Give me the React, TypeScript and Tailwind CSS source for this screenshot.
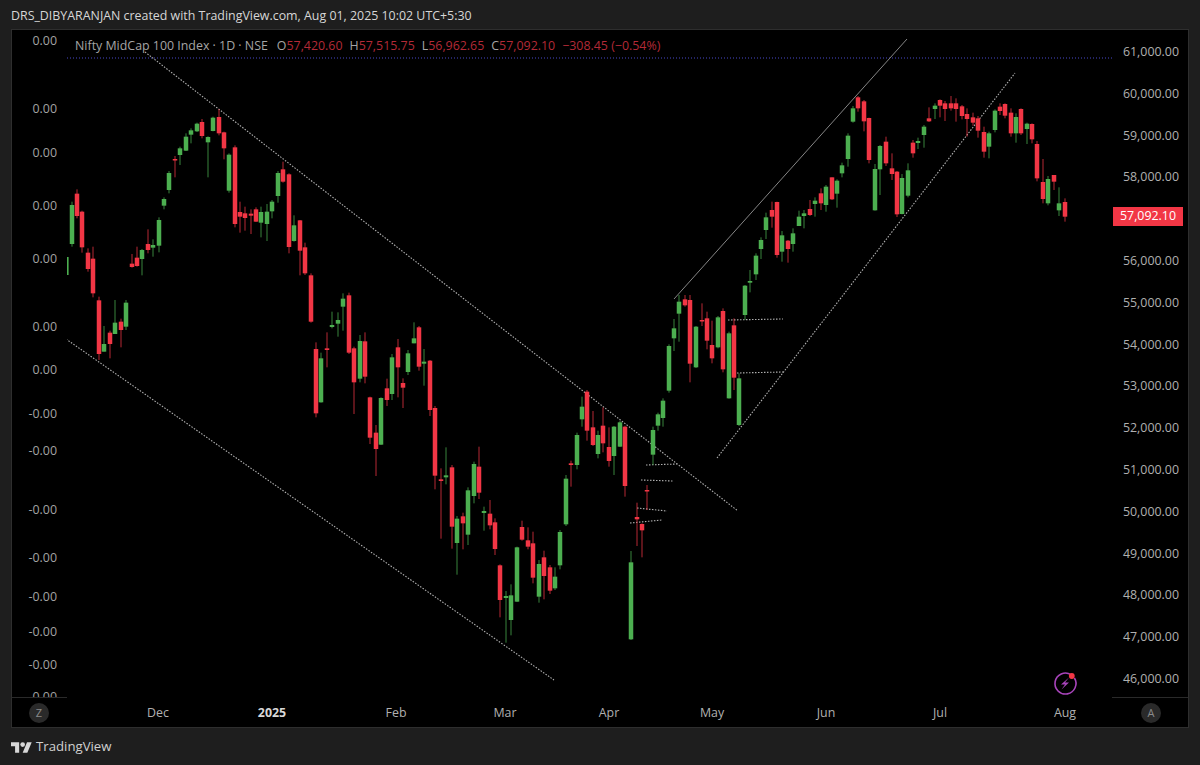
type Row = [string, number, number, number, number, number]
type Candle = { up: boolean; x: number; hi: number; top: number; bot: number; lo: number }

// candles read off the picture, grouped by region: [colour, x, high, body top, body bottom, low]
// each group has its own origin and is in 3x units
const crop = (ox: number, oy: number, rows: Row[]): Candle[] =>
  rows.map(([c, x, hi, top, bot, lo]) => ({
    up: c === "g",
    x: ox + x / 3,
    hi: oy + hi / 3,
    top: oy + top / 3,
    bot: oy + bot / 3,
    lo: oy + lo / 3,
  }))

const CANDLES: Candle[] = [
  ...crop(60, 90, [
    ["g", 36, 335, 345, 462, 470], ["r", 51, 298, 311, 378, 385], ["r", 67, 362, 365, 472, 488],
    ["r", 84, 475, 488, 537, 545], ["r", 100, 470, 506, 610, 622], ["r", 118, 620, 631, 792, 810],
    ["g", 133, 708, 762, 785, 785], ["r", 149, 722, 728, 762, 805], ["g", 166, 630, 698, 732, 732],
    ["r", 182, 686, 695, 720, 772], ["g", 197, 630, 638, 710, 720], ["r", 215, 492, 521, 531, 533],
    ["r", 231, 470, 503, 528, 530], ["g", 246, 477, 480, 507, 556], ["r", 264, 418, 462, 480, 490],
    ["g", 279, 448, 465, 473, 500], ["g", 297, 382, 390, 467, 487], ["g", 312, 322, 327, 347, 358],
    ["g", 328, 243, 249, 300, 310], ["r", 345, 198, 207, 211, 262], ["g", 361, 170, 175, 195, 225],
    ["g", 377, 130, 140, 182, 183], ["g", 394, 115, 121, 134, 160], ["g", 410, 98, 101, 124, 126],
    ["r", 425, 87, 96, 138, 145], ["g", 443, 139, 141, 157, 262], ["g", 458, 80, 83, 123, 124],
    ["r", 476, 57, 81, 130, 136], ["r", 491, 125, 127, 175, 208], ["g", 507, 190, 194, 302, 308],
    ["r", 524, 166, 172, 402, 412], ["r", 540, 335, 366, 380, 428], ["r", 555, 350, 370, 384, 422],
    ["r", 573, 358, 371, 377, 432], ["r", 588, 352, 358, 395, 396], ["g", 604, 350, 366, 398, 442],
    ["g", 622, 342, 365, 402, 453], ["g", 637, 330, 335, 364, 385], ["g", 655, 243, 249, 318, 338],
    ["r", 670, 215, 238, 275, 278], ["r", 686, 250, 253, 471, 490], ["g", 703, 376, 406, 453, 455],
    ["r", 719, 390, 391, 482, 556], ["r", 735, 458, 472, 550, 555], ["r", 752, 550, 556, 695, 698],
  ]),
  ...crop(300, 280, [
    ["r", 48, 187, 207, 400, 412], ["g", 63, 218, 235, 367, 368], ["r", 81, 157, 205, 210, 262],
    ["g", 97, 95, 135, 141, 145], ["g", 114, 97, 120, 131, 170], ["g", 130, 40, 56, 80, 152],
    ["r", 146, 38, 46, 218, 222], ["r", 163, 200, 205, 307, 402], ["g", 179, 165, 183, 296, 307],
    ["r", 194, 157, 184, 290, 310], ["r", 211, 350, 352, 473, 492], ["r", 227, 435, 458, 507, 588],
    ["g", 243, 352, 354, 494, 495], ["r", 260, 296, 325, 360, 378], ["g", 276, 222, 232, 342, 360],
    ["r", 293, 177, 202, 262, 352], ["r", 309, 295, 309, 323, 384], ["g", 324, 210, 220, 276, 285],
    ["g", 342, 127, 175, 190, 190], ["r", 357, 138, 142, 260, 272], ["g", 373, 207, 245, 251, 317],
    ["r", 390, 240, 242, 390, 408], ["r", 406, 378, 384, 587, 628], ["r", 422, 565, 598, 603, 776],
    ["g", 438, 502, 586, 592, 613], ["r", 455, 555, 562, 740, 806], ["g", 472, 708, 716, 789, 884],
    ["r", 488, 698, 709, 730, 808], ["g", 503, 622, 631, 764, 795], ["g", 521, 545, 552, 648, 670],
    ["r", 537, 500, 560, 638, 657], ["g", 552, 680, 693, 699, 752], ["r", 570, 660, 701, 736, 748],
    ["r", 585, 715, 727, 807, 825], ["r", 601, 853, 856, 960, 1012], ["r", 667, 722, 741, 779, 782],
    ["r", 683, 742, 781, 800, 808], ["r", 700, 755, 790, 893, 910], ["g", 716, 840, 852, 950, 968],
    ["r", 732, 812, 832, 888, 958], ["r", 749, 855, 862, 932, 942], ["g", 765, 862, 890, 925, 930],
    ["g", 780, 750, 756, 856, 868], ["g", 798, 585, 596, 733, 738], ["r", 813, 542, 550, 555, 620],
    ["g", 831, 458, 465, 555, 568],
  ]),
  ...crop(490, 530, [
    ["g", 47, 183, 198, 204, 338], ["g", 63, 163, 196, 270, 316], ["g", 81, 50, 52, 215, 216],
  ]),
  ...crop(550, 290, [
    ["g", 96, 320, 350, 388, 410], ["r", 111, 300, 305, 422, 452], ["r", 129, 363, 412, 465, 468],
    ["g", 144, 422, 435, 492, 505], ["r", 160, 352, 407, 460, 487], ["r", 177, 412, 471, 513, 530],
    ["g", 193, 408, 410, 498, 555], ["g", 209, 392, 397, 470, 471], ["r", 226, 407, 410, 588, 620],
    ["g", 242, 783, 817, 1048, 1050], ["r", 260, 638, 681, 688, 768], ["r", 275, 700, 702, 721, 802],
    ["r", 291, 585, 600, 604, 660], ["g", 308, 410, 420, 494, 525], ["g", 324, 368, 373, 407, 422],
    ["g", 339, 325, 332, 384, 410], ["g", 357, 163, 168, 302, 308], ["g", 373, 87, 115, 145, 183],
    ["g", 388, 15, 35, 71, 155], ["r", 405, 15, 28, 46, 50], ["r", 421, 15, 30, 221, 277],
    ["g", 439, 108, 110, 232, 234], ["r", 455, 40, 90, 94, 108], ["r", 470, 65, 85, 152, 178],
    ["r", 487, 92, 165, 205, 220], ["g", 503, 78, 82, 172, 175], ["r", 518, 55, 63, 238, 247],
    ["g", 536, 125, 130, 325, 326], ["r", 552, 85, 106, 263, 300], ["g", 567, 250, 265, 405, 408],
  ]),
  ...crop(735, 240, [
    ["g", 30, 135, 137, 225, 240], ["g", 45, 90, 123, 128, 157],
  ]),
  ...crop(740, 90, [
    ["g", 47, 490, 497, 553, 570], ["g", 63, 442, 450, 477, 507], ["g", 79, 368, 382, 420, 447],
    ["r", 96, 335, 360, 380, 413], ["r", 111, 335, 336, 495, 503], ["g", 127, 423, 436, 485, 515],
    ["r", 144, 450, 452, 477, 518], ["g", 160, 415, 430, 462, 485], ["g", 176, 362, 380, 408, 408],
    ["g", 193, 360, 370, 378, 415], ["r", 209, 330, 357, 375, 378], ["g", 226, 322, 332, 342, 380],
    ["r", 242, 295, 310, 340, 360], ["g", 258, 285, 290, 345, 365], ["r", 275, 262, 262, 328, 330],
    ["g", 291, 268, 272, 311, 353], ["g", 306, 218, 226, 250, 262], ["g", 324, 130, 137, 207, 230],
    ["g", 340, 48, 55, 95, 98], ["r", 354, 18, 22, 55, 65], ["r", 372, 30, 34, 94, 124],
    ["r", 388, 83, 84, 210, 220], ["g", 405, 222, 237, 361, 362], ["g", 421, 165, 168, 238, 315],
    ["r", 437, 140, 155, 220, 228], ["r", 455, 190, 235, 252, 270], ["r", 470, 243, 245, 373, 381],
    ["g", 485, 252, 264, 372, 373], ["g", 503, 220, 241, 317, 322],
  ]),
  ...crop(890, 90, [
    ["r", 68, 150, 158, 190, 203], ["g", 84, 143, 153, 159, 177], ["g", 102, 105, 110, 135, 173],
    ["r", 117, 52, 85, 94, 96], ["g", 134, 40, 47, 57, 87], ["r", 150, 28, 30, 47, 82],
    ["r", 166, 33, 40, 57, 93], ["r", 183, 18, 40, 55, 62], ["r", 199, 25, 40, 57, 95],
    ["r", 215, 45, 49, 78, 88], ["r", 232, 55, 72, 87, 140], ["r", 248, 68, 82, 98, 107],
    ["r", 263, 78, 85, 122, 143], ["r", 281, 110, 126, 185, 203], ["g", 296, 125, 130, 170, 205],
    ["g", 314, 58, 62, 120, 127], ["r", 329, 40, 50, 63, 75], ["r", 345, 40, 42, 77, 85],
    ["r", 362, 55, 68, 130, 140], ["g", 378, 70, 81, 130, 158], ["r", 393, 55, 57, 130, 135],
    ["g", 411, 98, 101, 117, 162], ["r", 427, 100, 102, 148, 160], ["r", 442, 153, 162, 265, 274],
    ["r", 459, 207, 276, 327, 340], ["g", 475, 258, 267, 340, 346], ["r", 493, 255, 255, 275, 300],
    ["g", 508, 292, 340, 361, 378], ["r", 524, 325, 336, 380, 395],
  ]),
]

// trend lines in page coordinates
const DOTTED = [
  [145, 52, 738, 511],
  [66, 339, 554, 680],
  [717, 458, 1015, 73],
  [728, 320, 783, 319],
  [737, 373, 783, 372],
  [646, 465, 677, 464],
  [641, 480, 673, 481],
  [637, 508, 667, 511],
  [630, 523, 662, 520],
]

const LEFT_TICKS: [string, number][] = [
  ["0.00", 41], ["0.00", 109], ["0.00", 153], ["0.00", 206], ["0.00", 259], ["0.00", 327], ["0.00", 370],
  ["-0.00", 414], ["-0.00", 451], ["-0.00", 510], ["-0.00", 558], ["-0.00", 597], ["-0.00", 632], ["-0.00", 665], ["0.00", 697],
]

// 57,000.00 sits under the last price tag, so its row stays empty
const PRICES = ["61,000.00", "60,000.00", "59,000.00", "58,000.00", "", "56,000.00", "55,000.00", "54,000.00",
  "53,000.00", "52,000.00", "51,000.00", "50,000.00", "49,000.00", "48,000.00", "47,000.00", "46,000.00"]

const MONTHS: [string, number, boolean][] = [
  ["Dec", 158, false], ["2025", 272, true], ["Feb", 396, false], ["Mar", 505, false], ["Apr", 609, false],
  ["May", 712, false], ["Jun", 826, false], ["Jul", 940, false], ["Aug", 1065, false],
]

const OHLC = [["O", "57,420.60"], ["H", "57,515.75"], ["L", "56,962.65"], ["C", "57,092.10"]]

const FONT = "font-['Open_Sans','Noto_Sans',sans-serif]"

function Chart() {
  return (
    <svg viewBox="67 30 1045 668" className="block h-[668px] w-[1045px]">
      <line x1="67" y1="58" x2="1112" y2="58" stroke="#4848c8" strokeWidth="1" strokeDasharray="1 2" />
      {DOTTED.map(([x1, y1, x2, y2], i) => (
        <line key={i} x1={x1} y1={y1} x2={x2} y2={y2} stroke="#b0b0b0" strokeWidth="1.1" strokeDasharray="1.5 1.5" />
      ))}
      <line x1="674" y1="299" x2="907" y2="39" stroke="#858585" strokeWidth="1" />
      <rect x="67" y="257" width="1.6" height="18" fill="#4caf50" />
      {CANDLES.map((c, i) => {
        const color = c.up ? "#4caf50" : "#f23645"
        const x = Math.round(c.x)
        return (
          <g key={i}>
            <rect x={x - 0.5} y={c.hi} width="1" height={c.lo - c.hi} fill={color} opacity="0.75" />
            <rect x={x - 2.25} y={c.top} width="4.5" height={Math.max(c.bot - c.top, 1.5)} fill={color} />
          </g>
        )
      })}
      {/* bolt badge */}
      <path d="M1071 674.6 A10.5 10.5 0 1 0 1074.4 678" fill="none" stroke="#a844bb" strokeWidth="1.6" />
      <path d="M1069 677.5 L1061 684.5 H1065 L1061.5 689.5 L1069 682.5 H1065 Z" fill="#a844bb" />
      <circle cx="1071.8" cy="676" r="2.9" fill="#f23645" />
    </svg>
  )
}

export default function App() {
  return (
    <div className={`flex h-[765px] w-[1200px] flex-col overflow-hidden bg-[#1e1e1e] text-[12.4px] ${FONT}`}>
      <div className="flex h-[29px] items-center pl-[11px] pt-[3px] text-[#d6d6d6]">
        DRS_DIBYARANJAN created with TradingView.com, Aug 01, 2025 10:02 UTC+5:30
      </div>

      <div className="mx-[11px] flex h-[699px] flex-col border border-[#2e2e2e] bg-black">
        <div className="flex h-[668px]">
          {/* left scale */}
          <div className="relative h-[668px] w-[55px] overflow-hidden border-b border-[#2a2a2a]">
            {LEFT_TICKS.map(([label, y], i) => (
              <div key={i} className="absolute right-[10px] -translate-y-1/2 text-[#a3a3a3]" style={{ top: y - 30 }}>
                {label}
              </div>
            ))}
          </div>

          <div className="relative w-[1045px]">
            <Chart />
            <div className="absolute left-[8px] top-[7px] flex gap-[9px] whitespace-nowrap text-[#a5a5a5]">
              <span>Nifty MidCap 100 Index · 1D · NSE</span>
              <span className="flex gap-[7px]">
                {OHLC.map(([k, v]) => (
                  <span key={k}>
                    {k}
                    <span className="text-[#b32a37]">{v}</span>
                  </span>
                ))}
                <span className="text-[#b32a37]">−308.45 (−0.54%)</span>
              </span>
            </div>
          </div>

          {/* price scale */}
          <div className="relative h-[668px] w-[76px] border-b border-[#2a2a2a]">
            <div className="flex flex-col items-end pr-[9px] pt-[1.5px]">
              {PRICES.map((p, i) => (
                <div key={i} className="flex h-[41.8px] items-center text-[#b0b0b0]">
                  {p}
                </div>
              ))}
            </div>
            <div className="absolute left-[1px] top-[177px] flex h-[19px] w-[70px] items-center justify-center bg-[#f23645] text-white">
              57,092.10
            </div>
          </div>
        </div>

        {/* time scale */}
        <div className="relative flex-1 text-[#b0b0b0]">
          <div className="absolute left-[17px] top-[5px] flex size-[20px] items-center justify-center rounded-full bg-[#2a2a2a] text-[11px] text-[#8a8a8a]">
            Z
          </div>
          {MONTHS.map(([label, x, bold]) => (
            <div
              key={label}
              className={`absolute top-[6px] -translate-x-1/2 ${bold ? "font-bold text-[#d8d8d8]" : ""}`}
              style={{ left: x - 12 }}
            >
              {label}
            </div>
          ))}
          <div className="absolute right-[27px] top-[5px] flex size-[20px] items-center justify-center rounded-full bg-[#2a2a2a] text-[11px] text-[#8a8a8a]">
            A
          </div>
        </div>
      </div>

      <div className="flex flex-1 items-center gap-[4px] pl-[11px] pt-[1px]">
        <svg viewBox="0 4 36 18" className="h-[11px] w-[21px]" fill="#d8d8d8">
          <path d="M14 22H7V11H0V4h14v18zM28 22h-8l7.5-18h8L28 22z" />
          <circle cx="20" cy="8" r="4" />
        </svg>
        <span className="text-[13.2px] text-[#d0d0d0]">TradingView</span>
      </div>
    </div>
  )
}
